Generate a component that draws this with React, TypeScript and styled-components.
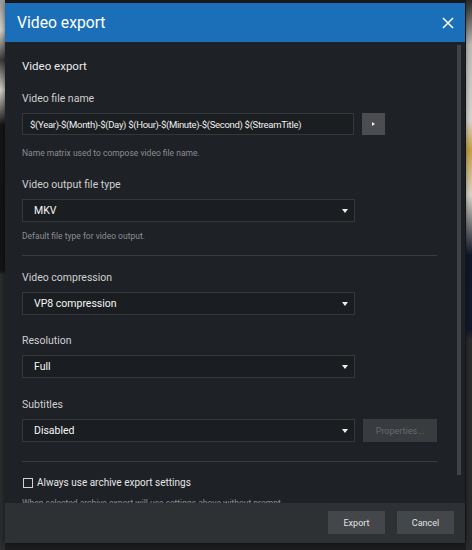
import React from "react";
import styled, { createGlobalStyle } from "styled-components";

const GlobalStyle = createGlobalStyle`
  html, body {
    margin: 0;
    padding: 0;
    height: 100%;
  }
  body {
    font-family: Roboto, "Liberation Sans", sans-serif;
    background:
      linear-gradient(to bottom, #9a9a96 0, #d9d6cc 30px, #3a3a3a 60px, #d8d5ca 90px, #151515 125px, #141414 270px, #2b2d30 275px) left top / 5px 100% no-repeat,
      linear-gradient(to bottom, #2a2a2a 0, #bfbdb8 45px, #d8d6d0 120px, #c6a244 150px, #d9d5c8 195px, #10182a 255px, #121a2c 330px, #2a2b2d 340px) right top / 6px 100% no-repeat,
      #1c1d1f;
  }
`;

const Dialog = styled.div`
  margin: 3px 0 0 5px;
  width: 460px;
  height: 540px;
  display: flex;
  flex-direction: column;
  background: #1e2125;
  box-shadow: 0 0 6px rgba(0, 0, 0, 0.6);
`;

const Header = styled.div`
  height: 39px;
  flex: none;
  background: #1b6fb8;
  display: flex;
  align-items: center;
  justify-content: space-between;
  padding: 0 11px 0 12px;
  box-sizing: border-box;
`;

const HeaderTitle = styled.div`
  color: #fff;
  font-size: 15.7px;
`;

const CloseButton = styled.button`
  border: 0;
  background: transparent;
  padding: 0;
  width: 12px;
  height: 12px;
  display: flex;
  cursor: pointer;
`;

const BodyFrame = styled.div`
  flex: 1;
  position: relative;
  overflow: hidden;
`;

const Body = styled.div`
  height: 100%;
  box-sizing: border-box;
  overflow: hidden;
  padding: 15px 28px 0 17px;
`;

const ScrollThumb = styled.div`
  position: absolute;
  top: 3px;
  right: 4px;
  width: 4px;
  height: 430px;
  background: #3f4246;
`;

const SectionTitle = styled.div`
  color: #eaeaea;
  font-size: 11.5px;
  line-height: 18px;
`;

const Field = styled.div<{ $top: number }>`
  margin-top: ${(p) => p.$top}px;
`;

const Label = styled.div`
  color: #cfd0d1;
  font-size: 10.5px;
  line-height: 16px;
  margin-bottom: 6px;
`;

const Row = styled.div`
  display: flex;
  gap: 8px;
  align-items: stretch;
`;

const TextInput = styled.input`
  width: 332px;
  height: 22px;
  box-sizing: border-box;
  background: #1b1e21;
  border: 1px solid #34373b;
  color: #f0f0f0;
  font-family: inherit;
  font-size: 9.5px;
  letter-spacing: -0.3px;
  padding: 0 7px;
  outline: none;
`;

const SmallButton = styled.button`
  width: 23px;
  height: 22px;
  border: 0;
  padding: 0;
  background: #4b4d50;
  display: flex;
  align-items: center;
  justify-content: center;
  &::after {
    content: "";
    border-top: 2px solid transparent;
    border-bottom: 2px solid transparent;
    border-left: 3px solid #f2f2f2;
  }
`;

const Select = styled.div`
  width: 333px;
  height: 23px;
  box-sizing: border-box;
  background: #1b1e21;
  border: 1px solid #34373b;
  display: flex;
  align-items: center;
  justify-content: space-between;
  padding: 0 6px 0 11px;
  color: #f6f6f6;
  font-size: 10.5px;
  &::after {
    content: "";
    border-left: 3px solid transparent;
    border-right: 3px solid transparent;
    border-top: 4px solid #eeeeee;
  }
`;

const GhostButton = styled.button`
  width: 74px;
  height: 23px;
  border: 0;
  background: #393c3f;
  color: #66696c;
  font-family: inherit;
  font-size: 9px;
  padding: 0;
`;

const Hint = styled.div<{ $top: number }>`
  color: #8b8e91;
  font-size: 8.5px;
  line-height: 14px;
  margin-top: ${(p) => p.$top}px;
`;

const Divider = styled.div<{ $top: number; $bottom: number }>`
  height: 1px;
  background: #383b3f;
  margin: ${(p) => p.$top}px 0 ${(p) => p.$bottom}px;
`;

const CheckRow = styled.label`
  display: flex;
  align-items: center;
  gap: 4px;
  color: #e6e6e6;
  font-size: 10px;
  line-height: 16px;
`;

const CheckBox = styled.span`
  width: 10px;
  height: 10px;
  box-sizing: border-box;
  border: 1px solid #d2d2d2;
  margin-left: 1px;
`;

const Footer = styled.div`
  height: 40px;
  flex: none;
  background: #2e3134;
  display: flex;
  justify-content: flex-end;
  align-items: flex-start;
  gap: 12px;
  padding: 8px 11px 0 0;
  box-sizing: border-box;
`;

const FooterButton = styled.button`
  width: 57px;
  height: 23px;
  border: 0;
  background: #44474a;
  color: #e2e2e2;
  font-family: inherit;
  font-size: 9px;
  padding: 0;
`;

export default function App() {
  return (
    <>
      <GlobalStyle />
      <Dialog>
        <Header>
          <HeaderTitle>Video export</HeaderTitle>
          <CloseButton aria-label="Close">
            <svg width="12" height="12" viewBox="0 0 12 12">
              <path d="M1 1 L11 11 M11 1 L1 11" stroke="#fff" strokeWidth="1.5" />
            </svg>
          </CloseButton>
        </Header>
        <BodyFrame>
          <Body>
            <SectionTitle>Video export</SectionTitle>

            <Field $top={16}>
              <Label>Video file name</Label>
              <Row>
                <TextInput
                  readOnly
                  value="$(Year)-$(Month)-$(Day) $(Hour)-$(Minute)-$(Second) $(StreamTitle)"
                />
                <SmallButton aria-label="Insert" />
              </Row>
              <Hint $top={11}>Name matrix used to compose video file name.</Hint>
            </Field>

            <Field $top={17}>
              <Label>Video output file type</Label>
              <Select>MKV</Select>
              <Hint $top={7}>Default file type for video output.</Hint>
            </Field>

            <Divider $top={12} $bottom={0} />

            <Field $top={14}>
              <Label>Video compression</Label>
              <Select>VP8 compression</Select>
            </Field>

            <Field $top={18}>
              <Label>Resolution</Label>
              <Select>Full</Select>
            </Field>

            <Field $top={19}>
              <Label>Subtitles</Label>
              <Row>
                <Select>Disabled</Select>
                <GhostButton disabled>Properties...</GhostButton>
              </Row>
            </Field>

            <Divider $top={19} $bottom={13} />

            <CheckRow>
              <CheckBox />
              Always use archive export settings
            </CheckRow>
            <Hint $top={5}>When selected archive export will use settings above without prompt.</Hint>
          </Body>
          <ScrollThumb />
        </BodyFrame>
        <Footer>
          <FooterButton>Export</FooterButton>
          <FooterButton>Cancel</FooterButton>
        </Footer>
      </Dialog>
    </>
  );
}
